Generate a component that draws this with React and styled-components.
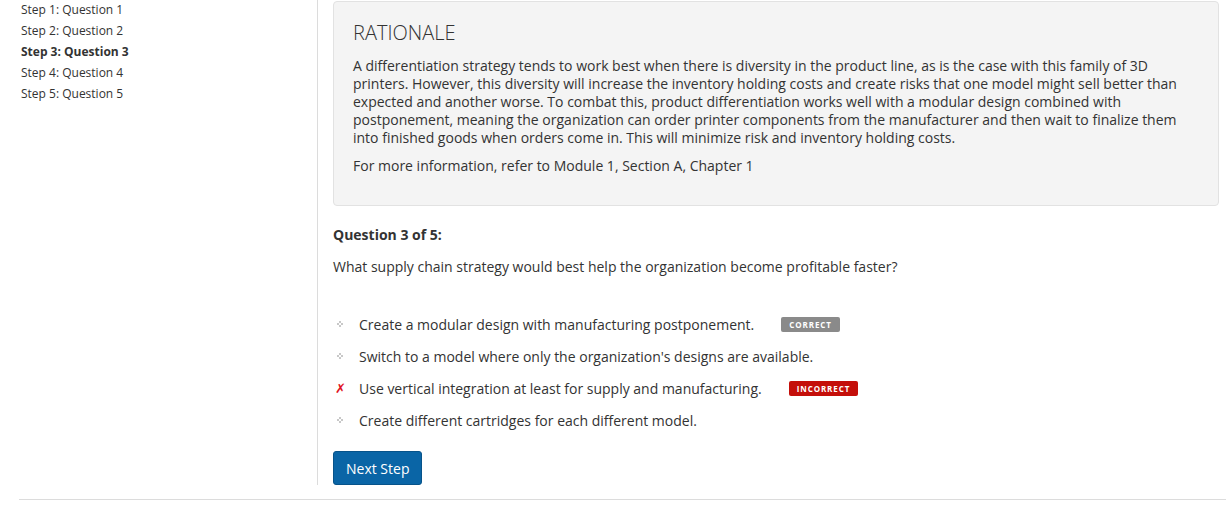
import React from "react";
import styled, { createGlobalStyle } from "styled-components";

const Global = createGlobalStyle`
  html, body { margin: 0; padding: 0; background: #fff; }
  body { font-family: "Open Sans", "Noto Sans", Arial, sans-serif; color: #333; }
  * { box-sizing: border-box; }
`;

const Page = styled.div`
  width: 1226px;
  height: 505px;
  overflow: hidden;
`;

const Layout = styled.div`
  display: flex;
  align-items: stretch;
  height: 485px;
`;

const Sidebar = styled.nav`
  width: 318px;
  flex: none;
  padding-left: 21px;
  border-right: 1px solid #dcdcdc;
`;

const StepList = styled.ul`
  list-style: none;
  margin: -1px 0 0 0;
  padding: 0;
`;

const StepItem = styled.li`
  font-size: 12px;
  line-height: 21px;
  height: 21px;
  font-weight: ${(p) => (p.$active ? 700 : 400)};
  color: #333;
`;

const Main = styled.main`
  flex: 1;
  padding: 1px 7px 0 15px;
  display: flex;
  flex-direction: column;
  & > * { flex-shrink: 0; }
`;

const RationaleBox = styled.section`
  background: #f4f4f4;
  border: 1px solid #e2e2e2;
  border-radius: 4px;
  padding: 18px 19px 20px 19px;
  height: 205px;
`;

const RationaleTitle = styled.h2`
  margin: 0 0 11px 0;
  font-size: 20px;
  font-weight: 300;
  line-height: 26px;
  color: #333;
`;

const Para = styled.p`
  margin: 0 0 10px 0;
  font-size: 14px;
  line-height: 18px;
  color: #333;
`;

const QuestionHead = styled.h3`
  margin: 19px 0 0 0;
  font-size: 14px;
  font-weight: 700;
  line-height: 20px;
  color: #333;
`;

const QuestionText = styled.p`
  margin: 12px 0 0 0;
  font-size: 14px;
  line-height: 20px;
  color: #333;
`;

const Options = styled.ul`
  list-style: none;
  margin: 31px 0 0 0;
  padding: 0;
`;

const Option = styled.li`
  display: flex;
  align-items: center;
  height: 32px;
  font-size: 14px;
  color: #333;
`;

const Marker = styled.span`
  width: 26px;
  flex: none;
  display: flex;
  align-items: center;
  padding-left: 4px;
`;

const Cross = styled.span`
  color: #e0141e;
  font-size: 13px;
  font-weight: 700;
  font-style: italic;
  font-family: "DejaVu Sans", sans-serif;
  margin-left: -2px;
`;

const Badge = styled.span`
  margin-left: 27px;
  display: inline-flex;
  align-items: center;
  height: 15px;
  padding: 0 8px;
  border-radius: 2px;
  background: ${(p) => (p.$kind === "correct" ? "#8a8a8a" : "#c40f0a")};
  color: #fff;
  font-size: 8px;
  font-weight: 700;
  letter-spacing: 0.9px;
`;

const NextButton = styled.button`
  margin-top: 15px;
  align-self: flex-start;
  height: 34px;
  padding: 0 12px;
  background: #0a65a6;
  border: 1px solid #07538a;
  border-radius: 3px;
  color: #fff;
  font-family: "Open Sans", "Noto Sans", Arial, sans-serif;
  font-size: 14px;
  font-weight: 400;
  cursor: pointer;
`;

const Rule = styled.hr`
  margin: 14px 0 0 19px;
  border: none;
  border-top: 1px solid #dcdcdc;
  height: 0;
`;

const Dot = () => (
  <svg width="6" height="6" viewBox="0 0 6 6">
    <rect x="2" y="0" width="2" height="2" fill="#c8c8c8" />
    <rect x="0" y="2" width="2" height="2" fill="#c8c8c8" />
    <rect x="4" y="2" width="2" height="2" fill="#c8c8c8" />
    <rect x="2" y="4" width="2" height="2" fill="#c8c8c8" />
  </svg>
);

const steps = [
  "Step 1: Question 1",
  "Step 2: Question 2",
  "Step 3: Question 3",
  "Step 4: Question 4",
  "Step 5: Question 5",
];

const options = [
  { text: "Create a modular design with manufacturing postponement.", badge: "correct" },
  { text: "Switch to a model where only the organization's designs are available." },
  { text: "Use vertical integration at least for supply and manufacturing.", badge: "incorrect", wrong: true },
  { text: "Create different cartridges for each different model." },
];

export default function App() {
  return (
    <Page>
      <Global />
      <Layout>
        <Sidebar>
          <StepList>
            {steps.map((s, i) => (
              <StepItem key={s} $active={i === 2}>{s}</StepItem>
            ))}
          </StepList>
        </Sidebar>
        <Main>
          <RationaleBox>
            <RationaleTitle>RATIONALE</RationaleTitle>
            <Para>
              A differentiation strategy tends to work best when there is diversity in the product line, as is the case with this family of 3D printers. However, this diversity will increase the inventory holding costs and create risks that one model might sell better than expected and another worse. To combat this, product differentiation works well with a modular design combined with postponement, meaning the organization can order printer components from the manufacturer and then wait to finalize them into finished goods when orders come in. This will minimize risk and inventory holding costs.
            </Para>
            <Para>For more information, refer to Module 1, Section A, Chapter 1</Para>
          </RationaleBox>
          <QuestionHead>Question 3 of 5:</QuestionHead>
          <QuestionText>What supply chain strategy would best help the organization become profitable faster?</QuestionText>
          <Options>
            {options.map((o) => (
              <Option key={o.text}>
                <Marker>{o.wrong ? <Cross>✗</Cross> : <Dot />}</Marker>
                <span>{o.text}</span>
                {o.badge && (
                  <Badge $kind={o.badge}>{o.badge === "correct" ? "CORRECT" : "INCORRECT"}</Badge>
                )}
              </Option>
            ))}
          </Options>
          <NextButton>Next Step</NextButton>
        </Main>
      </Layout>
      <Rule />
    </Page>
  );
}
